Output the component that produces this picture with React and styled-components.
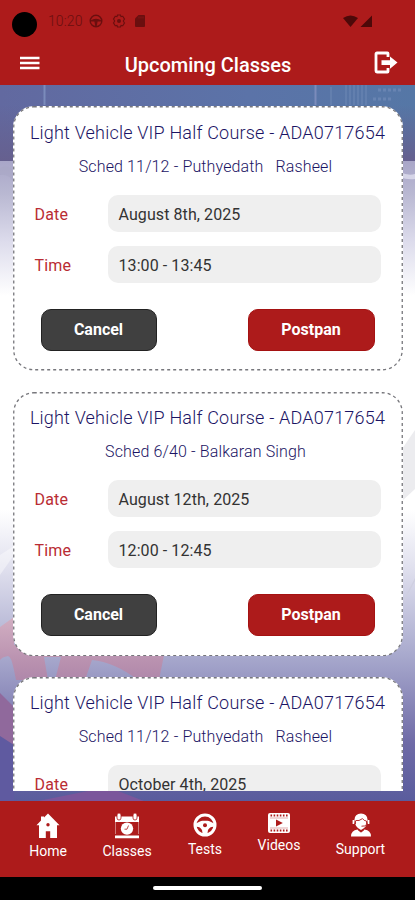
import React from "react";
import styled, { createGlobalStyle } from "styled-components";

const classes = [
  {
    course: "Light Vehicle VIP Half Course - ADA0717654",
    sched: "Sched 11/12 - Puthyedath   Rasheel",
    date: "August 8th, 2025",
    time: "13:00 - 13:45",
  },
  {
    course: "Light Vehicle VIP Half Course - ADA0717654",
    sched: "Sched 6/40 - Balkaran Singh",
    date: "August 12th, 2025",
    time: "12:00 - 12:45",
  },
  {
    course: "Light Vehicle VIP Half Course - ADA0717654",
    sched: "Sched 11/12 - Puthyedath   Rasheel",
    date: "October 4th, 2025",
  },
];

function App() {
  return (
    <>
      <GlobalStyle />
      <Screen>
        <StatusBar>
          <Camera />
          <Clock>10:20</Clock>
          <WheelStatusIcon />
          <GearStatusIcon />
          <CardStatusIcon />
          <Signals>
            <SignalIcons />
          </Signals>
        </StatusBar>

        <TitleBar>
          <IconButton aria-label="Menu">
            <MenuIcon />
          </IconButton>
          <PageTitle>Upcoming Classes</PageTitle>
          <IconButton aria-label="Log out">
            <LogoutIcon />
          </IconButton>
        </TitleBar>

        <Content>
          <Backdrop />
          <List>
            {classes.map((item, i) => (
              <ClassCard key={i} {...item} />
            ))}
          </List>
        </Content>

        <NavBar>
          <NavItem $width={96}>
            <HomeIcon />
            <NavLabel>Home</NavLabel>
          </NavItem>
          <NavItem $width={62}>
            <ClassesIcon />
            <NavLabel>Classes</NavLabel>
          </NavItem>
          <NavItem $width={94}>
            <WheelIcon />
            <NavLabel>Tests</NavLabel>
          </NavItem>
          <NavItem $width={54}>
            <VideosIcon />
            <NavLabel>Videos</NavLabel>
          </NavItem>
          <NavItem $width={109}>
            <SupportIcon />
            <NavLabel>Support</NavLabel>
          </NavItem>
        </NavBar>
        <GestureBar>
          <Handle />
        </GestureBar>
      </Screen>
    </>
  );
}

function ClassCard({ course, sched, date, time }) {
  return (
    <Card>
      <CardOutline aria-hidden="true">
        <rect x="0.75" y="0.75" width="388.5" height="263" rx="20" />
      </CardOutline>
      <Course>{course}</Course>
      <Sched>{sched}</Sched>
      <Field>
        <Label>Date</Label>
        <Value>{date}</Value>
      </Field>
      {time && (
        <>
          <Field>
            <Label>Time</Label>
            <Value>{time}</Value>
          </Field>
          <Actions>
            <Button $dark $width={116}>
              Cancel
            </Button>
            <Button $width={127}>Postpan</Button>
          </Actions>
        </>
      )}
    </Card>
  );
}

function Backdrop() {
  return (
    <BackdropSvg viewBox="0 0 415 716" preserveAspectRatio="none">
      <defs>
        <linearGradient id="sky" x1="0" x2="1" y1="0" y2="0">
          <stop offset="0" stopColor="#6269a0" />
          <stop offset="0.6" stopColor="#5b73a8" />
          <stop offset="1" stopColor="#5577a6" />
        </linearGradient>
        <linearGradient id="haze" x1="0" x2="0" y1="0" y2="1">
          <stop offset="0" stopColor="#66608f" stopOpacity="0" />
          <stop offset="1" stopColor="#66608f" />
        </linearGradient>
        <linearGradient id="road" x1="0" x2="0" y1="0" y2="1">
          <stop offset="0" stopColor="#a9a6c8" />
          <stop offset="0.12" stopColor="#b9b8d2" />
          <stop offset="0.3" stopColor="#dddcec" />
          <stop offset="0.5" stopColor="#ffffff" />
          <stop offset="1" stopColor="#ffffff" />
        </linearGradient>
        <linearGradient id="dusk" x1="0" x2="0" y1="0" y2="1">
          <stop offset="0" stopColor="#ffffff" />
          <stop offset="0.2" stopColor="#e0e0ee" />
          <stop offset="0.5" stopColor="#a8a9cd" />
          <stop offset="0.8" stopColor="#6f6ba7" />
          <stop offset="1" stopColor="#5a5c9d" />
        </linearGradient>
        <linearGradient id="wheel" gradientUnits="userSpaceOnUse" x1="0" x2="0" y1="530" y2="655">
          <stop offset="0" stopColor="#d3b0c3" />
          <stop offset="0.4" stopColor="#b78fae" />
          <stop offset="1" stopColor="#90699c" />
        </linearGradient>
      </defs>
      <rect width="415" height="716" fill="#fff" />
      <rect width="415" height="78" fill="url(#sky)" />
      <rect y="20" width="415" height="56" fill="url(#haze)" />
      <path d="M44.5 0V20M315.5 0V20" stroke="#7b8bbb" strokeWidth="2" />
      <path
        d="M331 2V20M346 0V20M350 0V20M354 0V20M358 0V20M362 0V20M366 0V20"
        stroke="#6783b1"
        strokeWidth="1.5"
      />
      <path d="M378 5H402M373 14H392" stroke="#6884b2" strokeWidth="3" strokeDasharray="3 2" />
      <rect y="76" width="415" height="270" fill="url(#road)" />
      <path d="M400 87q8 4 15 2v5q-8 1-15-2z" fill="#d6d5e8" />
      <path d="M0 83q10-4 14 4v10q-6-9-14-7z" fill="#a8a6c3" opacity="0.5" />
      <path d="M402 364l13-19v59l-13 12z" fill="#ececef" />
      <rect y="425" width="415" height="291" fill="url(#dusk)" />
      <path d="M0 470l14-9v9L0 490z" fill="#fff" opacity="0.4" />
      <path d="M402 518l13-25v3l-13 24z" fill="#cfcfe0" />
      <path
        d="M0 542L14 532V560H166L159 595H138Q114 577 92 575L85 595H55L61 572H44L48 595H16L14 585Q11 571 8 571Q2 572 0 575z"
        fill="url(#wheel)"
      />
      <path d="M0 608L14 622V662L0 654z" fill="#90699c" />
      <path d="M0 651L14 660V716H0z" fill="#5f5aa0" />
      <path d="M38 716L88 706H118L144 716z" fill="#7b569b" />
    </BackdropSvg>
  );
}

const WheelStatusIcon = () => (
  <StatusIcon width="14" height="14" viewBox="0 0 14 14">
    <circle cx="7" cy="7" r="5.8" fill="none" stroke="currentColor" strokeWidth="1.4" />
    <path d="M1.5 6.4Q7 3.2 12.5 6.4V7.6H8.6L7.7 12.5H6.3L5.4 7.6H1.5z" fill="currentColor" />
  </StatusIcon>
);

const GearStatusIcon = () => (
  <StatusIcon width="14" height="14" viewBox="0 0 14 14">
    <path
      d="M5.5 1h3l.5 1.6 1.8-.3 1.7 2.8L11.3 7l1.2 1.9-1.7 2.8-1.8-.3-.5 1.6h-3L5 11.4l-1.8.3-1.7-2.8L2.7 7 1.5 5.1l1.7-2.8 1.8.3z"
      fill="none"
      stroke="currentColor"
      strokeWidth="1.1"
    />
    <circle cx="7" cy="7" r="2" fill="currentColor" />
  </StatusIcon>
);

const CardStatusIcon = () => (
  <StatusIcon width="12" height="14" viewBox="0 0 12 14">
    <path d="M4.5 1H10q1 0 1 1v10q0 1-1 1H2q-1 0-1-1V4.5z" fill="currentColor" />
    <path d="M5 2.5v2M7 2.5v2M9 2.5v2" stroke="#8b1717" strokeWidth="0.8" />
  </StatusIcon>
);

const SignalIcons = () => (
  <svg width="30" height="14" viewBox="0 0 30 14">
    <path d="M0 4Q7.5-1 15 4L7.5 13z" fill="currentColor" />
    <path d="M17.5 13L29 1.5V13z" fill="currentColor" />
  </svg>
);

const MenuIcon = () => (
  <svg width="20" height="14" viewBox="0 0 20 14">
    <path d="M0 2H19.5M0 7H19.5M0 12H19.5" stroke="currentColor" strokeWidth="2.4" />
  </svg>
);

const LogoutIcon = () => (
  <svg width="24" height="24" viewBox="0 0 24 24">
    <path
      d="M14 6V2.6Q14 2 13.4 2H3Q2 2 2 3V20Q2 21 3 21H13.4Q14 21 14 20.4V17"
      fill="none"
      stroke="currentColor"
      strokeWidth="2.8"
    />
    <path d="M7.5 9.3H16V5.5L23.5 11.6L16 17.7V13.9H7.5z" fill="currentColor" />
  </svg>
);

const HomeIcon = () => (
  <svg width="24" height="26" viewBox="0 0 24 26">
    <path
      d="M12 .5L23.5 12.2H21V25H14.2V18.3H9.8V25H3V12.2H.5L5 7.5V3.5H8V4.6z"
      fill="#fff"
    />
    <circle cx="12" cy="11.8" r="1.7" fill="#ad1b1b" />
  </svg>
);

const ClassesIcon = () => (
  <svg width="26" height="26" viewBox="0 0 26 26">
    <path d="M1 3.5H25V9H1zM1 22.5H25V25.2H1z" fill="#fff" />
    <path d="M1.5 8V21M24.5 8V21" stroke="#fff" strokeWidth="0.7" opacity="0.6" />
    <rect x="3" y="0" width="4" height="7" rx="2" fill="#fff" stroke="#ad1b1b" strokeWidth="0.8" />
    <rect x="19" y="0" width="4" height="7" rx="2" fill="#fff" stroke="#ad1b1b" strokeWidth="0.8" />
    <circle cx="13" cy="15.6" r="6.2" fill="#fff" />
    <path d="M14.5 12.5L13 16.2H10.5" fill="none" stroke="#ad1b1b" strokeWidth="0.8" />
  </svg>
);

const WheelIcon = () => (
  <svg width="24" height="24" viewBox="0 0 24 24">
    <circle cx="12" cy="12" r="10" fill="none" stroke="#fff" strokeWidth="3" />
    <path
      d="M2 11Q7 8 9.5 7.8H14.5Q17 8 22 11V13.8Q17 13 15 17L14.2 22H9.8L9 17Q7 13 2 13.8z"
      fill="#fff"
    />
    <circle cx="12" cy="12.2" r="2" fill="#ad1b1b" />
  </svg>
);

const VideosIcon = () => (
  <svg width="24" height="20" viewBox="0 0 24 20">
    <rect x="1" y="0" width="22" height="20" rx="2" fill="#fff" />
    <path
      d="M3.5 2.4H21M3.5 17.6H21"
      stroke="#ad1b1b"
      strokeWidth="2"
      strokeDasharray="1.6 1.5"
    />
    <path d="M3 5H21M3 15H21" stroke="#ad1b1b" strokeWidth="0.6" opacity="0.6" />
    <path d="M9 6.5L15.8 10L9 13.5z" fill="#ad1b1b" />
  </svg>
);

const SupportIcon = () => (
  <svg width="22" height="24" viewBox="0 0 22 24">
    <path d="M1 23.5Q1 17.3 7.5 16.5L11 19.5L14.5 16.5Q21 17.3 21 23.5z" fill="#fff" />
    <path d="M11 .5Q17.3 .5 17.6 7Q17.2 14.5 11 17Q4.8 14.5 4.4 7Q4.7 .5 11 .5z" fill="#fff" />
    <path
      d="M5.5 7.5Q9 8.4 12.5 5.6Q14 8 16.5 8M5.5 8V11M16.5 8V11.5Q15.5 13.5 11.5 13.2"
      fill="none"
      stroke="#ad1b1b"
      strokeWidth="0.9"
    />
    <path d="M3.4 7V11M18.6 7V11" stroke="#fff" strokeWidth="1.6" />
    <path d="M8 16.8L11 19L14 16.8" fill="none" stroke="#ad1b1b" strokeWidth="0.8" />
  </svg>
);

const GlobalStyle = createGlobalStyle`
  * {
    box-sizing: border-box;
  }

  body {
    margin: 0;
    font-family: Roboto, sans-serif;
  }
`;
const Screen = styled.div`
  display: flex;
  flex-direction: column;
  width: 415px;
  height: 900px;
  overflow: hidden;
  background: #ad1b1b;
`;
const StatusBar = styled.div`
  display: flex;
  align-items: center;
  height: 41px;
  padding-left: 12px;
  color: #6a0f0f;
`;
const Camera = styled.div`
  width: 25px;
  height: 25px;
  margin: 8px 11px 0 0;
  border-radius: 50%;
  background: #000;
`;
const Clock = styled.span`
  width: 41px;
  font-size: 14px;
  font-weight: 300;
  letter-spacing: 0.1px;
`;
const StatusIcon = styled.svg`
  margin-right: 8.5px;
`;
const Signals = styled.div`
  display: flex;
  margin: 0 42px 0 auto;
  color: #4d0909;
`;
const TitleBar = styled.header`
  display: flex;
  align-items: center;
  justify-content: space-between;
  height: 44px;
  padding: 0 17px 0 20px;
  color: #fff;
`;
const IconButton = styled.button`
  display: flex;
  padding: 0;
  border: none;
  background: none;
  color: #fff;
`;
const PageTitle = styled.h1`
  margin: 3px 0 0 2px;
  font-size: 20px;
  font-weight: 500;
`;
const Content = styled.main`
  position: relative;
  height: 716px;
  padding-bottom: 10px;
`;
const BackdropSvg = styled.svg`
  position: absolute;
  inset: 0;
  width: 100%;
  height: 100%;
`;
const List = styled.div`
  position: relative;
  display: flex;
  flex-direction: column;
  gap: 20.75px;
  height: 706px;
  padding: 21.25px 12.5px 0;
  overflow: hidden;
`;
const Card = styled.section`
  position: relative;
  flex: none;
  width: 390px;
  height: 264.5px;
  padding: 14.5px 22px 0;
  border-radius: 21px;
  background: #fff;
`;
const CardOutline = styled.svg`
  position: absolute;
  inset: 0;
  width: 100%;
  height: 100%;
  fill: none;
  stroke: #77777c;
  stroke-width: 1.3;
  stroke-dasharray: 3 3;
`;
const Course = styled.h2`
  margin: 0 -12px;
  line-height: 24px;
  font-size: 18px;
  font-weight: 300;
  letter-spacing: 0.2px;
  text-align: center;
  white-space: pre;
  color: #1b1464;
`;
const Sched = styled.p`
  margin: 11px 4px 17.25px 0;
  line-height: 22px;
  font-size: 16px;
  font-weight: 300;
  letter-spacing: 0.13px;
  text-align: center;
  white-space: pre;
  color: #1b1464;
`;
const Field = styled.div`
  display: flex;
  align-items: center;
  height: 36px;
  margin-bottom: 15px;
`;
const Label = styled.span`
  width: 73px;
  padding-top: 2px;
  font-size: 16px;
  letter-spacing: 0.2px;
  color: #b92c33;
`;
const Value = styled.div`
  width: 273px;
  height: 37px;
  padding: 1px 0 0 11px;
  border-radius: 10px;
  background: #efefef;
  line-height: 37px;
  font-size: 16px;
  letter-spacing: 0.08px;
  color: #333;
`;
const Actions = styled.div`
  display: flex;
  justify-content: space-between;
  padding: 11.5px 6px 0 6px;
`;
const Button = styled.button`
  width: ${(props) => props.$width}px;
  height: 42px;
  padding: 0;
  border: 1px solid ${(props) => (props.$dark ? "#222" : "#a51212")};
  border-radius: 10px;
  background: ${(props) => (props.$dark ? "#404040" : "#ad1b1b")};
  color: #fff;
  font-family: inherit;
  font-size: 16px;
  font-weight: 700;
`;
const NavBar = styled.nav`
  display: flex;
  align-items: flex-start;
  height: 76px;
  padding-top: 12px;
  color: #fff;
`;
const NavItem = styled.div`
  display: flex;
  flex-direction: column;
  align-items: center;
  gap: 2px;
  width: ${(props) => props.$width}px;
`;
const NavLabel = styled.span`
  line-height: 20px;
  font-size: 14px;
`;
const GestureBar = styled.div`
  display: flex;
  justify-content: center;
  height: 23px;
  padding-top: 9px;
  background: #000;
`;
const Handle = styled.div`
  width: 109px;
  height: 4px;
  border-radius: 2px;
  background: #fff;
`;
export default App;
